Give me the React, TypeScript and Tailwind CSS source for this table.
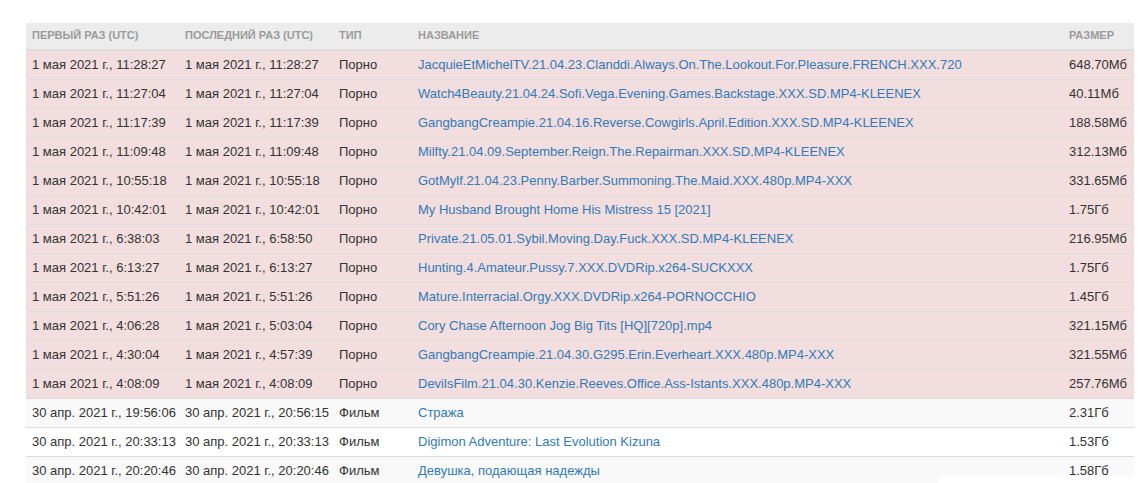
import React from 'react';

type Row = {
  first: string;
  last: string;
  type: string;
  name: string;
  size: string;
  danger?: boolean;
};

const rows: Row[] = [
  { first: '1 мая 2021 г., 11:28:27', last: '1 мая 2021 г., 11:28:27', type: 'Порно', name: 'JacquieEtMichelTV.21.04.23.Clanddi.Always.On.The.Lookout.For.Pleasure.FRENCH.XXX.720', size: '648.70Мб', danger: true },
  { first: '1 мая 2021 г., 11:27:04', last: '1 мая 2021 г., 11:27:04', type: 'Порно', name: 'Watch4Beauty.21.04.24.Sofi.Vega.Evening.Games.Backstage.XXX.SD.MP4-KLEENEX', size: '40.11Мб', danger: true },
  { first: '1 мая 2021 г., 11:17:39', last: '1 мая 2021 г., 11:17:39', type: 'Порно', name: 'GangbangCreampie.21.04.16.Reverse.Cowgirls.April.Edition.XXX.SD.MP4-KLEENEX', size: '188.58Мб', danger: true },
  { first: '1 мая 2021 г., 11:09:48', last: '1 мая 2021 г., 11:09:48', type: 'Порно', name: 'Milfty.21.04.09.September.Reign.The.Repairman.XXX.SD.MP4-KLEENEX', size: '312.13Мб', danger: true },
  { first: '1 мая 2021 г., 10:55:18', last: '1 мая 2021 г., 10:55:18', type: 'Порно', name: 'GotMylf.21.04.23.Penny.Barber.Summoning.The.Maid.XXX.480p.MP4-XXX', size: '331.65Мб', danger: true },
  { first: '1 мая 2021 г., 10:42:01', last: '1 мая 2021 г., 10:42:01', type: 'Порно', name: 'My Husband Brought Home His Mistress 15 [2021]', size: '1.75Гб', danger: true },
  { first: '1 мая 2021 г., 6:38:03', last: '1 мая 2021 г., 6:58:50', type: 'Порно', name: 'Private.21.05.01.Sybil.Moving.Day.Fuck.XXX.SD.MP4-KLEENEX', size: '216.95Мб', danger: true },
  { first: '1 мая 2021 г., 6:13:27', last: '1 мая 2021 г., 6:13:27', type: 'Порно', name: 'Hunting.4.Amateur.Pussy.7.XXX.DVDRip.x264-SUCKXXX', size: '1.75Гб', danger: true },
  { first: '1 мая 2021 г., 5:51:26', last: '1 мая 2021 г., 5:51:26', type: 'Порно', name: 'Mature.Interracial.Orgy.XXX.DVDRip.x264-PORNOCCHIO', size: '1.45Гб', danger: true },
  { first: '1 мая 2021 г., 4:06:28', last: '1 мая 2021 г., 5:03:04', type: 'Порно', name: 'Cory Chase Afternoon Jog Big Tits [HQ][720p].mp4', size: '321.15Мб', danger: true },
  { first: '1 мая 2021 г., 4:30:04', last: '1 мая 2021 г., 4:57:39', type: 'Порно', name: 'GangbangCreampie.21.04.30.G295.Erin.Everheart.XXX.480p.MP4-XXX', size: '321.55Мб', danger: true },
  { first: '1 мая 2021 г., 4:08:09', last: '1 мая 2021 г., 4:08:09', type: 'Порно', name: 'DevilsFilm.21.04.30.Kenzie.Reeves.Office.Ass-Istants.XXX.480p.MP4-XXX', size: '257.76Мб', danger: true },
  { first: '30 апр. 2021 г., 19:56:06', last: '30 апр. 2021 г., 20:56:15', type: 'Фильм', name: 'Стража', size: '2.31Гб' },
  { first: '30 апр. 2021 г., 20:33:13', last: '30 апр. 2021 г., 20:33:13', type: 'Фильм', name: 'Digimon Adventure: Last Evolution Kizuna', size: '1.53Гб' },
  { first: '30 апр. 2021 г., 20:20:46', last: '30 апр. 2021 г., 20:20:46', type: 'Фильм', name: 'Девушка, подающая надежды', size: '1.58Гб' },
];

const App = () => {
  return (
    <div className="relative h-[483px] overflow-hidden bg-white pt-[23px] pl-[26px] font-['Liberation_Sans',Arial,sans-serif] text-[13px] text-[#333]">
      <table className="w-[1108px] table-fixed border-collapse">
        <colgroup>
          <col className="w-[153px]" />
          <col className="w-[154px]" />
          <col className="w-[79px]" />
          <col className="w-[651px]" />
          <col className="w-[71px]" />
        </colgroup>
        <thead>
          <tr className="h-[27px] bg-[#ececec]">
            {['Первый раз (UTC)', 'Последний раз (UTC)', 'Тип', 'Название', 'Размер'].map((h) => (
              <th
                key={h}
                className="border-b-2 border-[#dddddd] px-[6px] pt-0 pb-[7px] align-bottom text-left text-[11px] leading-[13px] font-bold uppercase text-[#9a9a9a]"
              >
                {h}
              </th>
            ))}
          </tr>
        </thead>
        <tbody>
          {rows.map((r, i) => {
            const bg = r.danger ? 'bg-[#f2dede]' : i % 2 === 0 ? 'bg-[#f9f9f9]' : 'bg-white';
            return (
              <tr key={i} className={`h-[29px] ${bg}`}>
                <td className="whitespace-nowrap border-t border-[#dddddd] px-[6px] py-0">{r.first}</td>
                <td className="whitespace-nowrap border-t border-[#dddddd] px-[6px] py-0">{r.last}</td>
                <td className="whitespace-nowrap border-t border-[#dddddd] px-[6px] py-0">{r.type}</td>
                <td className="whitespace-nowrap border-t border-[#dddddd] px-[6px] py-0">
                  <a href="#" className="text-[#337ab7]">
                    {r.name}
                  </a>
                </td>
                <td className="whitespace-nowrap border-t border-[#dddddd] px-[6px] py-0">{r.size}</td>
              </tr>
            );
          })}
        </tbody>
      </table>
      {/* stray white box overlapping the last row */}
      <div className="absolute left-[938px] top-[476px] h-[7px] w-[208px] bg-white" />
    </div>
  );
};

export default App;
